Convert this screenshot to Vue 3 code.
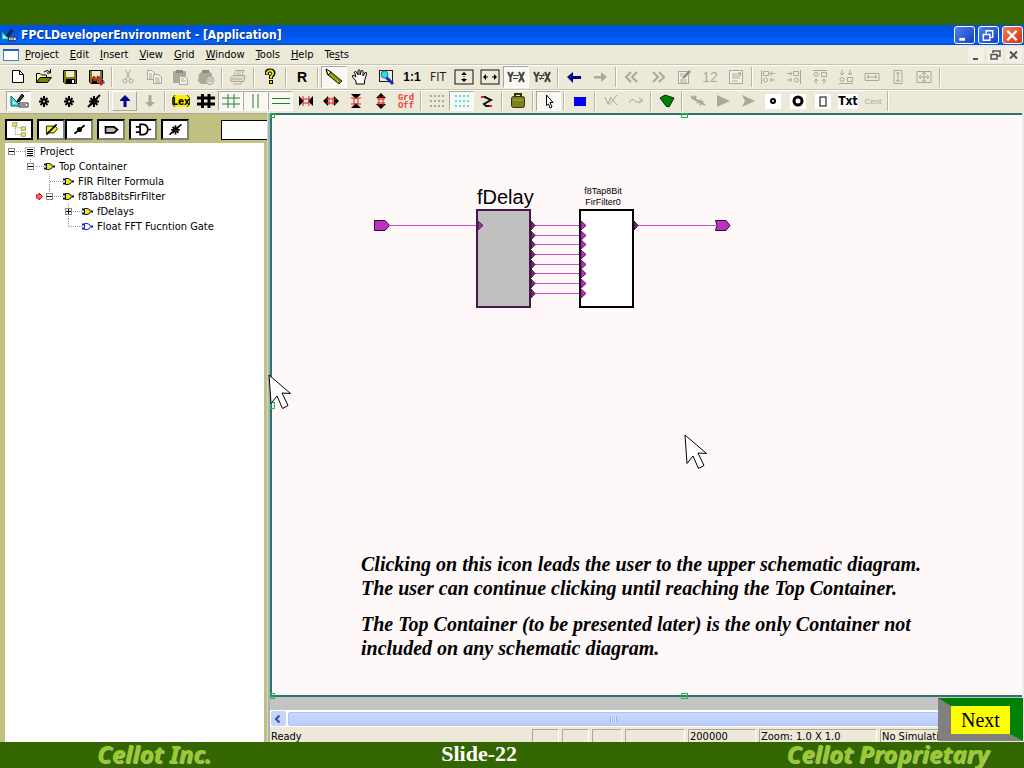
<script setup>
const G = '#aca899'
const dots = (c) => [4, 9, 14].map((y) => [4, 8, 12, 16].map((x) => `<rect x="${x - 1}" y="${y}" width="2" height="2" fill="${c}"/>`).join('')).join('')
const word = (t, size, c = '#000', weight = 700, family = 'Liberation Sans') =>
  `<text x="10" y="${10 + Math.round(size * 0.36)}" text-anchor="middle" font-family="${family}, sans-serif" font-weight="${weight}" font-size="${size}" fill="${c}">${t}</text>`
const line = (d, c, w = 1) => `<path d="${d}" fill="none" stroke="${c}" stroke-width="${w}"/>`
const gear = (w) => line('M10 5V16M5 10.500H15M6.500 7L13.500 14M13.500 7L6.500 14', '#000', w) + '<circle cx="10" cy="10.500" r="1" fill="#ece9d8"/>'

const icons = {
  sketch: '<path d="M2 5L2 15H12Z" fill="#40e0e0" stroke="#066" /><path d="M4 10V13H7Z" fill="#fff"/><path d="M8 10L13 3L15 5L10 11Z" fill="#333" stroke="#000"/><path d="M10 12H19V16H10Z" fill="#fff" stroke="#222"/><path d="M12 13V15M14 13V15M16 13V15" stroke="#222"/>',
  new: '<path d="M4.500 3.500H11.500L15.500 7.500V15.500H4.500Z" fill="#fff" stroke="#000"/><path d="M11.500 3.500V7.500H15.500" fill="none" stroke="#000"/>',
  open: '<path d="M2.500 15V6.500H6L7.500 8H12.500V10" fill="#ffffa0" stroke="#000"/><path d="M2.500 15.500L6 10.500H17.500L13.500 15.500Z" fill="#808000" stroke="#000"/>' + line('M10 5Q13 2 16 5M16.500 2V6H13', '#000'),
  save: '<path d="M3.500 3.500H16.500V16.500H5L3.500 15Z" fill="#808000" stroke="#000"/><rect x="6" y="4" width="8" height="6" fill="#ece9d8"/><rect x="6" y="12" width="9" height="5" fill="#000"/><rect x="12" y="13" width="2" height="3" fill="#fff"/>',
  saveAs: '<path d="M3.500 3.500H16.500V16.500H5L3.500 15Z" fill="#808000" stroke="#000"/><rect x="6" y="4" width="8" height="6" fill="#ece9d8"/><rect x="6" y="12" width="5" height="5" fill="#000"/>' + line('M8 9V13H12V10L15 11V17M13 15L15 17.500L18 15', '#d02020', 2) + line('M13 9L18 14V17', '#3090b0'),
  cut: line('M7.500 3L12 12M12.500 3L8 12', G) + '<circle cx="7" cy="14" r="2" fill="none" stroke="#aca899"/><circle cx="13" cy="14" r="2" fill="none" stroke="#aca899"/>',
  copy: '<path d="M3.500 3.500H8L10.500 6V12.500H3.500Z" fill="#f4f2e8" stroke="#aca899"/><path d="M9.500 7.500H14L17.500 10V16.500H9.500Z" fill="#f4f2e8" stroke="#aca899"/>' + line('M5 7H8M5 9H8M5 11H8M11 11H15M11 13H16M11 15H16', G),
  paste: '<rect x="3" y="4" width="13" height="12" rx="1" fill="#aca899"/><rect x="6" y="3" width="7" height="3" fill="#8f8b7c"/><path d="M9.500 9.500H15L17.500 12V17.500H9.500Z" fill="#f4f2e8" stroke="#aca899"/>' + line('M11 12H14M11 14H16', G),
  pasteRound: '<path d="M3 7L7 4H13L16 7V15L12 17H5L2 14Z" fill="#aca899"/><rect x="6" y="3" width="7" height="3" fill="#8f8b7c"/><circle cx="14" cy="13.500" r="4" fill="#e4e1d0" stroke="#aca899"/>' + line('M11 12H17M11 14H17', G),
  print: '<path d="M6 8L8 3.500H16L14 8" fill="#f4f2e8" stroke="#aca899"/><path d="M2.500 11L5 8.500H17L16 14.500H3Z" fill="#dedbcb" stroke="#aca899"/>' + line('M5 17H13L14 14M9 5H14M8 7H13M4 12H14', G),
  help: '<path d="M7 8V5Q7 3.500 10 3.500Q13.500 3.500 13.500 6Q13.500 8 11 9.500V12" fill="none" stroke="#000" stroke-width="4"/><path d="M7 7.500V5.500Q8 3.500 10 3.500Q13 3.500 13 6Q13 8 11 9.500V11.500" fill="none" stroke="#e8e000" stroke-width="2"/><rect x="9" y="13" width="4" height="4" fill="#000"/><rect x="10" y="14" width="2" height="2" fill="#e8e000"/>',
  run: word('R', 14),
  pencil: '<path d="M2 3L7 5L18 14L15 17L4 8Z" fill="#808000" stroke="#333300"/><path d="M2 2L7 5L4 8Z" fill="#ffffc0" stroke="#000"/>' + line('M6 7L15 15', '#d0d060'),
  hand: '<path d="M6 17V14L2.500 10Q2 8 4 8.500L6 10L4.500 5Q5 3.500 6.500 5L8 8V3.500Q9 2 10 3.500V8L11.500 3.500Q13 3 13 4.500V9L15 5.500Q17 5 16.500 7L14.500 14V17Z" fill="#fff" stroke="#000"/>',
  magnify: '<rect x="3.500" y="3.500" width="13" height="11" fill="none" stroke="#222"/><path d="M10 10L17 17" stroke="#1030c0" stroke-width="3"/><circle cx="8.500" cy="7.500" r="3.500" fill="#30d8e8" stroke="#208090"/>',
  oneToOne: word('1:1', 12),
  fit: word('FIT', 12, '#222', 400, 'DejaVu Sans Condensed'),
  fitHeight: '<rect x="1" y="3" width="18" height="14" fill="none" stroke="#111"/><path d="M10 5L13 8H7ZM10 15L7 12H13Z" fill="#000"/><path d="M10 7V13" stroke="#000" stroke-dasharray="1 1"/>',
  fitWidth: '<rect x="1" y="3" width="18" height="14" fill="none" stroke="#111"/><path d="M3 10L6 7V13ZM17 10L14 7V13Z" fill="#000"/><path d="M5 10H8M12 10H15" stroke="#000"/>',
  equal: line('M2 5L4.500 10L7 5M4.500 10V15M13 5L18 15M18 5L13 15', '#444', 2) + line('M7 8.500H13M7 11.500H12', '#444'),
  notEqual: line('M2 5L4.500 10L7 5M4.500 10V15M13 5L18 15M18 5L13 15', '#444', 2) + line('M7 8.500H13M7 11.500H12M8 13L12 6', '#444'),
  back: '<path d="M3 10L9 5V9H17V12H9V16Z" fill="#000090"/>',
  forward: '<path d="M17 10L11 5V9H4V11.500H11V15Z" fill="#aca899"/>',
  first: line('M9 5L4 10L9 15M15 5L10 10L15 15', G, 2),
  last: line('M5 5L10 10L5 15M11 5L16 10L11 15', G, 2),
  edit: '<rect x="4.500" y="4.500" width="10" height="12" fill="#f4f2e8" stroke="#aca899"/><path d="M8 12L9 9L15 3L17 5L11 11Z" fill="#97937f"/>' + line('M6 15H13M6 7H10M6 9H8M6 13H13', G),
  twelve: word('12', 14, G, 400),
  page: '<rect x="3.500" y="3.500" width="13" height="13" fill="#f4f2e8" stroke="#aca899"/>' + line('M6 7H11M6 9H14M6 11H14M6 14H12', G) + '<path d="M11 6L15 5V9Z" fill="#aca899"/>',
  alignLeft: line('M3.500 3V17M5.500 4.500H10.500V8.500H5.500ZM5.500 13A2 2 0 1 0 9.500 13A2 2 0 1 0 5.500 13M17 6.500H12M14 4.500L12 6.500L14 8.500M17 13H12M14 11L12 13L14 15', G),
  alignRight: line('M16.500 3V17M9.500 4.500H14.500V8.500H9.500ZM10.500 13A2 2 0 1 0 14.500 13A2 2 0 1 0 10.500 13M3 6.500H8M6 4.500L8 6.500L6 8.500M3 13H8M6 11L8 13L6 15', G),
  alignTop: line('M3 3.500H17M11.500 5.500H16.500V9.500H11.500ZM4 7.500A2 2 0 1 0 8 7.500A2 2 0 1 0 4 7.500M6 17V12M4 14L6 12L8 14M14 17V12M12 14L14 12L16 14', G),
  alignBottom: line('M3 16.500H17M11.500 10.500H16.500V14.500H11.500ZM4 12.500A2 2 0 1 0 8 12.500A2 2 0 1 0 4 12.500M6 3V8M4 6L6 8L8 6M14 3V8M12 6L14 8L16 6', G),
  sameWidth: line('M3 6.500H17V13.500H3ZM5 10H15M7 8L5 10L7 12M13 8L15 10L13 12', G),
  sameHeight: line('M6 3.500H14V16.500H6ZM10 5V15M8 7L10 5L12 7M8 13L10 15L12 13', G),
  sameSize: line('M3 4.500H17V15.500H3ZM10 5V15M5 10H15M8 7L10 5L12 7M8 13L10 15L12 13M7 8L5 10L7 12M13 8L15 10L13 12', G),
  gearA: gear(2), gearB: gear(2), gearC: gear(2) + line('M4 16L16 4', '#000', 2),
  up: '<path d="M10 4L15 9V10H11.500V16H8.500V10H5V9Z" fill="#000090"/>',
  down: '<path d="M10 16L5 11H8.500V4H11.500V11H15Z" fill="#aca899"/>',
  lex: '<rect x="1" y="4" width="18" height="12" fill="#fff000"/>' + line('M4 4L1.500 7V13L4 16M16 4L18.500 7V13L16 16', '#444400') + '<text x="10" y="14" text-anchor="middle" font-family="DejaVu Sans Condensed, sans-serif" font-weight="700" font-size="10">Lex</text>',
  hashBold: line('M6.500 3V17M13 3V17M1 7H19M1 13H19', '#000', 3),
  hash: line('M7 3V17M13 3V17M1 7H19M1 13H19', '#228030', 1),
  vertical: line('M7 3V17M12 3V17', '#228030', 1),
  horizontal: line('M1 7.500H19M1 12.500H19', '#228030', 1),
  squeezeH: '<path d="M3 5L8 10L3 15ZM17 5L12 10L17 15Z" fill="#000"/>' + line('M7 5V15M13 5V15M7 8H13M7 12H13', '#e02020'),
  stretchH: '<path d="M2 10L7 5V15ZM18 10L13 5V15Z" fill="#000"/>' + line('M8 6V14M12 6V14M5 8H15M5 12H15', '#e02020'),
  squeezeV: '<path d="M5 3H15L10 8ZM5 17H15L10 12Z" fill="#000"/>' + line('M5 7H15M5 13H15M8 7V13M12 7V13', '#e02020'),
  stretchV: '<path d="M10 2L15 7H5ZM10 18L15 13H5Z" fill="#000"/>' + line('M6 8H14M6 12H14M8 5V15M12 5V15', '#e02020'),
  gridOff: '<g font-family="Liberation Mono, monospace" font-weight="700" font-size="9" fill="#f04040" text-anchor="middle"><text x="10" y="9">Grd</text><text x="10" y="17">Off</text></g>',
  dotsGray: dots(G),
  dotsCyan: dots('#50e0e8'),
  zig: line('M6 6H8L14 9L7 13L9 15H12', '#111', 2) + line('M4 6H7M12 15H15', '#e02020', 2),
  bag: '<rect x="3.500" y="5.500" width="13" height="11" rx="2" fill="#808020" stroke="#333300"/><path d="M7 5V3H13V5" fill="none" stroke="#333300" stroke-width="2"/>' + line('M5 9H15', '#b0b050'),
  pointer: '<path d="M7.500 4L14 11.500H11L13 16L11 17L9.500 13L7.500 14.500Z" fill="#fff" stroke="#000"/>',
  blue: '<rect x="4" y="6" width="12" height="9" fill="#0000f0"/>',
  checkX: line('M4 6L7 13L10 6M9 6L16 14M16 4L8 14', G),
  curve: line('M3 12Q6 6 9 10Q11 13 16 9M13 7L17 9.500L13 12', G),
  green: '<path d="M3 7L8 4L17 7L12 16L9 15Z" fill="#008000" stroke="#003000"/>',
  probe: line('M3 5L8 9L12 11L17 14M8 6L6 9M9 12L13 9M12 14L15 10M4 8L8 5', G, 2),
  play: '<path d="M4 4L17 10L4 16Z" fill="#aca899"/>',
  playNotch: '<path d="M4 4L17 10L4 16L7 10Z" fill="#aca899"/>',
  dot: '<rect x="2" y="3" width="16" height="15" fill="#fff"/><circle cx="10" cy="10" r="2" fill="none" stroke="#000" stroke-width="2"/>',
  ring: '<rect x="2" y="3" width="16" height="15" fill="#fff"/><circle cx="10" cy="10" r="4" fill="none" stroke="#000" stroke-width="3"/>',
  box: '<rect x="2" y="3" width="16" height="15" fill="#fff"/><rect x="7" y="6" width="6" height="9" fill="none" stroke="#000"/>',
  txt: '<rect x="0" y="3" width="20" height="15" fill="#fff"/>' + word('Txt', 12, '#000', 700, 'DejaVu Sans Condensed'),
  cent: word('Cent', 8, G, 400),
  tree: '<path d="M5 4V16H13M5 8H13" fill="none" stroke="#777" stroke-dasharray="1 1"/><g fill="#e6e670" stroke="#999950"><rect x="2" y="2" width="5" height="4"/><rect x="12" y="7" width="5" height="4"/><rect x="12" y="14" width="5" height="4"/></g>',
  netYellow: '<path d="M4 6H14L17 9L13 14H4Z" fill="#f4f020" stroke="#000"/><path d="M4 16L16 4" stroke="#000" stroke-width="2"/>',
  node: line('M4 15L16 5', '#000', 2) + '<circle cx="10" cy="10" r="3" fill="#000"/>',
  port: '<path d="M3 7H13L17 10L13 14H3Z" fill="#b8b8b8" stroke="#000" stroke-width="2"/>',
  gate: '<path d="M6 4H10Q15 5 15 10Q15 15 10 16H6Z" fill="#fff" stroke="#000" stroke-width="2"/>' + line('M1 7H6M1 13H6M15 10H19', '#000', 2),
  gearSlash: gear(2) + line('M3 16L17 4', '#000', 2),
}
const row1 = ['new', 'open', 'save', 'saveAs', '|', '-cut', '-copy', '-paste', '-pasteRound', '|', '-print', '|', 'help', '|', 'run', '|', '*pencil', 'hand', 'magnify', 'oneToOne', 'fit', 'fitHeight', 'fitWidth', '*equal', 'notEqual', '|', 'back', '-forward', '|', '-first', '-last', '-edit', '-twelve', '-page', '|', '-alignLeft', '-alignRight', '-alignTop', '-alignBottom', '-sameWidth', '-sameHeight', '-sameSize', '|']
const row2 = ['*sketch', 'gearA', 'gearB', 'gearC', '|', '+up', '-down', '|', 'lex', 'hashBold', '*hash', '*vertical', '*horizontal', 'squeezeH', 'stretchH', 'squeezeV', 'stretchV', 'gridOff', '|', 'dotsGray', '*dotsCyan', 'zig', '|', 'bag', '|', '*pointer', '|', 'blue', '|', '-checkX', '-curve', '|', 'green', '|', '-probe', '-play', '-playNotch', 'dot', 'ring', 'box', 'txt', '-cent', '|']
const parse = (row) => row.map((s) => ({
  sep: s === '|', name: s.replace(/^[-*+]/, ''), on: s[0] === '*', raised: s[0] === '+', off: s[0] === '-',
}))
const bars = [{ cls: 'wide', items: parse(row1) }, { cls: 'narrow', items: parse(row2) }]
const menus = [['', 'P', 'roject'], ['', 'E', 'dit'], ['', 'I', 'nsert'], ['', 'V', 'iew'], ['', 'G', 'rid'], ['', 'W', 'indow'], ['', 'T', 'ools'], ['', 'H', 'elp'], ['Te', 's', 'ts']]
const panels = ['tree', 'netYellow', 'node', 'port', 'gate', 'gearSlash']
const nodes = [
  { text: 'Project', level: 0, box: '-', kind: 'doc', rail: '' },
  { text: 'Top Container', level: 1, box: '-', kind: 'gate', rail: 'M5.500 0V4' },
  { text: 'FIR Filter Formula', level: 2, box: '', kind: 'gate', rail: 'M5.500 0V15' },
  { text: 'f8Tab8BitsFirFilter', level: 2, box: '-', kind: 'gate', rail: 'M5.500 0V4', here: true },
  { text: 'fDelays', level: 3, box: '+', kind: 'gate', rail: 'M5.500 0V15' },
  { text: 'Float FFT Fucntion Gate', level: 3, box: '', kind: 'open', rail: 'M5.500 0V8' },
]
const wires = [225, 235, 244, 254, 264, 273, 283, 293]
</script>

<template>
  <div class="slide">
    <div class="band"></div>
    <header class="title">
      <svg class="ico" viewBox="0 0 20 20" v-html="icons.sketch"></svg>
      <h1>FPCLDeveloperEnvironment - [Application]</h1>
      <button class="win" aria-label="Minimize"><svg viewBox="0 0 18 18"><path d="M4 13H10" stroke="#fff" stroke-width="3" /></svg></button>
      <button class="win" aria-label="Restore"><svg viewBox="0 0 18 18"><path d="M7 7V4H14V11H11M4 8H11V14H4Z" fill="none" stroke="#fff" stroke-width="1.500" /></svg></button>
      <button class="win close" aria-label="Close"><svg viewBox="0 0 18 18"><path d="M4 4L14 14M14 4L4 14" stroke="#fff" stroke-width="2.500" /></svg></button>
    </header>
    <nav class="menu">
      <svg class="doc" viewBox="0 0 16 12"><rect x=".5" y=".5" width="15" height="11" fill="#fff" stroke="#4080d0" /><path d="M0 1H16" stroke="#2060d0" stroke-width="2" /></svg>
      <button v-for="m in menus" :key="m[2]">{{ m[0] }}<u>{{ m[1] }}</u>{{ m[2] }}</button>
      <span class="grow"></span>
      <button class="mdi" aria-label="Minimize document"><svg viewBox="0 0 16 16"><path d="M5 12H10" stroke="#555" stroke-width="2" /></svg></button>
      <button class="mdi" aria-label="Restore document"><svg viewBox="0 0 16 16"><path d="M6 6V4H13V9H10M4 7.500H10V12H4Z" fill="none" stroke="#555" stroke-width="1.500" /></svg></button>
      <button class="mdi" aria-label="Close document"><svg viewBox="0 0 16 16"><path d="M4 4.500L11 11.500M11 4.500L4 11.500" stroke="#555" stroke-width="2" /></svg></button>
    </nav>
    <div v-for="bar in bars" :key="bar.cls" class="bar" :class="bar.cls">
      <template v-for="(b, i) in bar.items" :key="i">
        <span v-if="b.sep" class="sep"></span>
        <button v-else :class="{ on: b.on, raised: b.raised }" :disabled="b.off" :aria-label="b.name">
          <svg class="ico" viewBox="0 0 20 20" v-html="icons[b.name]"></svg>
        </button>
      </template>
    </div>

    <main class="work">
      <aside class="side">
        <div class="panels">
          <button v-for="p in panels" :key="p" :class="p" :aria-label="p">
            <svg class="ico" viewBox="0 0 20 20" v-html="icons[p]"></svg>
          </button>
          <input type="text" aria-label="Search" />
        </div>
        <ul class="tree">
          <li v-for="n in nodes" :key="n.text" :style="{ paddingLeft: 1 + n.level * 19 + 'px' }">
            <span class="branch">
              <svg v-if="n.here" class="here" viewBox="0 0 7 9"><path d="M0 3H3V1L6.500 4.500L3 8V6H0Z" fill="#ff7070" stroke="#d00000" /></svg>
              <svg width="19" height="15" viewBox="0 0 19 15">
                <path :d="n.rail + 'M6 7.500H19'" fill="none" stroke="#999" stroke-dasharray="1 1" />
                <template v-if="n.box">
                  <rect x="2.500" y="4.500" width="6" height="6" fill="#fff" stroke="#888" />
                  <path :d="n.box === '+' ? 'M3 7.500H8M5.500 5V10' : 'M3 7.500H8'" stroke="#000" />
                </template>
              </svg>
            </span>
            <svg width="15" height="15" viewBox="0 0 15 15">
              <g v-if="n.kind === 'doc'"><rect x=".5" y="3.500" width="9" height="9" fill="#fff" stroke="#bbb" /><path d="M2 5.500H8M2 7.500H8M2 9.500H8M2 11.500H8" stroke="#000" /></g>
              <g v-else :stroke="n.kind === 'open' ? '#2020c0' : '#101040'">
                <path d="M2.500 4.500H5Q8.500 5 8.500 7.500Q8.500 10 5 10.500H2.500Z" :fill="n.kind === 'open' ? '#fff' : '#f0f000'" />
                <path d="M0 5.500H2M0 9.500H2M9 7.500H11" stroke-width="2" />
              </g>
            </svg>
            <span>{{ n.text }}</span>
          </li>
        </ul>
      </aside>
      <div class="splitter"></div>
      <section class="editor">
        <div class="canvas">
          <i class="grip tl"></i><i class="grip tc"></i><i class="grip ml"></i><i class="grip bl"></i><i class="grip bc"></i>
          <svg class="diagram" width="400" height="140" viewBox="360 180 400 140" font-family="Liberation Sans, Arial, sans-serif">
            <text x="477" y="204" font-size="20">fDelay</text>
            <text x="603" y="194" font-size="9" text-anchor="middle">f8Tap8Bit</text>
            <text x="603" y="205" font-size="9" text-anchor="middle">FirFilter0</text>
            <g stroke="#cc50cc">
              <path d="M390 225.500H477M636 225.500H716" />
              <path v-for="y in wires" :key="y" :d="`M534 ${y}.500H581`" />
            </g>
            <rect x="477" y="210" width="53" height="97" fill="#c0c0c0" stroke="#48184c" stroke-width="2" />
            <rect x="580" y="210" width="53" height="97" fill="#fff" stroke="#000" stroke-width="2" />
            <path d="M478 221L483 225.500L478 230Z" fill="#a030a0" stroke="#48184c" />
            <path d="M634 221L638 225.500L634 230Z" fill="#703070" stroke="#301030" />
            <g v-for="y in wires" :key="y">
              <path :d="`M531 ${y - 4}L535 ${y}.500L531 ${y + 5}Z`" fill="#703070" stroke="#401040" />
              <path :d="`M581 ${y - 4}L586 ${y}.500L581 ${y + 5}Z`" fill="#c030b0" stroke="#601060" />
            </g>
            <path d="M374.500 220.500H385L389.500 225.500L385 230.500H374.500Z" fill="#c030c0" stroke="#300830" />
            <path d="M715.500 220.500H726L730 225.500L726 230.500H715.500L717 225.500Z" fill="#c030c0" stroke="#300830" />
          </svg>
          <div class="note">
            <p>Clicking on this icon leads the user to the upper schematic diagram. The user can continue clicking until reaching the Top Container.</p>
            <p>The Top Container (to be presented later) is the only Container not included on any schematic diagram.</p>
          </div>
          <svg class="cursor one" viewBox="0 0 24 36"><path d="M1 1L22.500 19.500L14 19L20 31.500L14.500 34.500L9 22L3 29.500Z" fill="#fff" stroke="#000" /></svg>
          <svg class="cursor two" viewBox="0 0 24 36"><path d="M1 1L22.500 19.500L14 19L20 31.500L14.500 34.500L9 22L3 29.500Z" fill="#fff" stroke="#000" /></svg>
        </div>
        <div class="scroll">
          <button aria-label="Scroll left"><svg viewBox="0 0 14 14"><path d="M8.500 3.500L5 7L8.500 10.500" fill="none" stroke="#35538f" stroke-width="2" /></svg></button>
          <div class="thumb"><i></i></div>
        </div>
        <div class="status">
          <span class="ready">Ready</span>
          <span class="cell s"></span><span class="cell s"></span><span class="cell m"></span><span class="cell l"></span>
          <span class="cell count">200000</span>
          <span class="cell zoom">Zoom: 1.0 X 1.0</span>
          <span class="cell sim">No Simulation</span>
        </div>
      </section>
    </main>
    <button class="next">Next</button>
    <footer class="foot">
      <span class="brand">Cellot Inc.</span>
      <strong>Slide-22</strong>
      <span class="brand">Cellot Proprietary</span>
    </footer>
  </div>
</template>

<style>
body { margin: 0; }
</style>

<style scoped>
* { box-sizing: border-box; }
.slide { position: relative; display: flex; flex-direction: column; height: 100vh; min-height: 600px; overflow: hidden; background: #336600; color: #000; font: 11px/15px "DejaVu Sans Condensed", Tahoma, "DejaVu Sans", sans-serif; }
button { margin: 0; padding: 0; border: 0; background: none; font: inherit; color: #000; }
svg { display: block; flex: none; }
.ico { width: 20px; height: 20px; }
.grow { flex: 1; }
.band { flex: none; height: 25px; }
.title { flex: none; display: flex; align-items: center; gap: 3px; height: 20px; padding-right: 1px; background: linear-gradient(#0050d8, #0058f0 60%, #0068ff 85%, #0048c8); }
.title > .ico { width: 17px; height: 17px; }
.title h1 { flex: 1; margin: 0; padding-left: 1px; color: #fff; font: bold 12px/18px "DejaVu Sans Condensed", sans-serif; text-shadow: 1px 1px #003090; }
.win { width: 21px; height: 18px; border: 1px solid #fff; border-radius: 3px; background: linear-gradient(135deg, #5080e8, #1040c8); }
.win svg { width: 18px; height: 17px; }
.win.close { background: linear-gradient(135deg, #f08060, #d03010); }
.menu { flex: none; display: flex; align-items: center; height: 19px; padding-left: 3px; background: #ece9d8; }
.menu .doc { width: 16px; height: 12px; margin-right: 6px; }
.menu > button { margin-right: 11px; white-space: nowrap; }
.menu > .mdi { width: 16px; margin: 0 2px 0 1px; background: #f3f1e7; }
.mdi svg { width: 16px; height: 16px; }
.bar { flex: none; display: flex; align-items: center; background: #ece9d8; border-top: 1px solid #c5c2b2; box-shadow: inset 0 1px #fff; }
.bar.wide { height: 25px; padding-left: 5px; }
.bar.narrow { height: 24px; padding: 0 0 2px 6px; }
.bar button { display: flex; align-items: center; justify-content: center; flex: none; height: 22px; width: 26px; border: 1px solid transparent; }
.bar.narrow button { width: 25px; height: 20px; }
.bar button.on { background: #f8f7f2; border-color: #aca899 #fff #fff #aca899; }
.bar button.raised { border-color: #fff #aca899 #aca899 #fff; }
.sep { flex: none; width: 2px; height: 20px; margin: 0 2px; border-left: 1px solid #b8b5a5; border-right: 1px solid #fff; }
.work { flex: 1; min-height: 0; display: flex; background: #fff; }
.side { flex: none; display: flex; flex-direction: column; width: 267px; padding: 4px 3px 0 5px; background: #c0c080; border-top: 1px solid #aca899; }
.panels { flex: none; display: flex; align-items: center; height: 23px; margin-bottom: 2px; }
.panels button { flex: none; display: flex; align-items: center; justify-content: center; width: 28px; height: 21px; margin-right: 4px; border: 2px solid #000; border-right-color: #808080; border-bottom-color: #808080; background: #fff; }
.panels .tree { border-color: #000; padding: 0; }
.panels .netYellow { margin-right: 0; }
.panels .ico { width: 19px; height: 17px; }
.panels input { flex: none; width: 48px; height: 20px; margin-left: 28px; padding: 0 2px; border: 1px solid #000; border-radius: 0; background: #fff; font: inherit; }
ul.tree { flex: 1; margin: 0; padding: 1px 0 0; background: #fff; list-style: none; }
.tree li { display: flex; height: 15px; white-space: nowrap; }
.branch { position: relative; }
.here { position: absolute; left: -8px; top: 3px; width: 7px; height: 9px; }
.splitter { flex: none; width: 3px; background: #a8b4b8; border-left: 1px solid #d8d8c8; }
.editor { flex: 1; min-width: 0; display: flex; flex-direction: column; border-right: 2px solid #e4ecec; background: #c4c4c4; }
.canvas { position: relative; flex: 1; min-height: 0; background: #fff8f8; border: 2px solid #2c7470; border-right: 0; }
.diagram { margin: 65px 0 0 88px; }
.note { max-width: 580px; margin: 232px 0 0 89px; font: italic bold 20px/24px "Liberation Serif", "Times New Roman", serif; }
.note p { margin: 0 0 12px; }
.grip { position: absolute; width: 7px; height: 5px; border: 1px solid #20b848; }
.grip.tl { left: -2px; top: -2px; width: 5px; }
.grip.tc { left: 409px; top: -2px; }
.grip.ml { left: -2px; top: 287px; width: 5px; height: 7px; }
.grip.bl { left: -2px; bottom: -4px; width: 5px; height: 6px; }
.grip.bc { left: 409px; bottom: -4px; height: 6px; }
.cursor { position: absolute; width: 24px; height: 36px; }
.cursor.one { left: -4px; top: 259px; }
.cursor.two { left: 412px; top: 319px; }
.scroll { flex: none; display: flex; align-items: center; gap: 2px; height: 17px; margin-top: 13px; padding: 1px; background: #fff; }
.scroll button { width: 15px; height: 15px; border-radius: 2px; background: #c4d4fc; }
.scroll button svg { width: 14px; height: 14px; }
.thumb { flex: 1; display: flex; align-items: center; justify-content: center; height: 14px; border: 1px solid #b0c4f4; border-radius: 2px; background: linear-gradient(#c8d8ff, #bcccfc); }
.thumb i { width: 7px; height: 6px; margin-right: 82px; background: repeating-linear-gradient(90deg, #9cb4ec 0 1px, #dce8ff 1px 2px); }
.status { flex: none; display: flex; gap: 3px; height: 15px; padding-top: 2px; background: #ece9d8; white-space: nowrap; line-height: 13px; }
.ready { flex: 1; padding-left: 1px; line-height: 15px; height: 13px; }
.cell { flex: none; height: 13px; padding-left: 1px; border: solid #aca899; border-width: 1px 1px 0; border-right-color: #fff; }
.s { width: 27px; }
.m { width: 30px; }
.l { width: 60px; }
.count { width: 68px; }
.zoom { width: 118px; }
.sim { width: 142px; }
.next { position: absolute; right: 1px; bottom: 27px; width: 85px; height: 43px; border: solid; border-width: 8px 13px 7px; border-color: #008000 #008000 #808080 #808080; background: #ff0; font: 20px/28px "Liberation Serif", "Times New Roman", serif; }
.foot { flex: none; display: flex; justify-content: space-between; height: 26px; padding: 0 35px 0 97px; color: #fff; background: #336600; }
.foot strong { margin-right: 40px; font: bold 22px/24px "Liberation Serif", "Times New Roman", serif; }
.brand { color: #99cc22; font: italic bold 24px/24px "Noto Sans", sans-serif; text-shadow: 1px 1px #a8b898; white-space: nowrap; }
</style>
